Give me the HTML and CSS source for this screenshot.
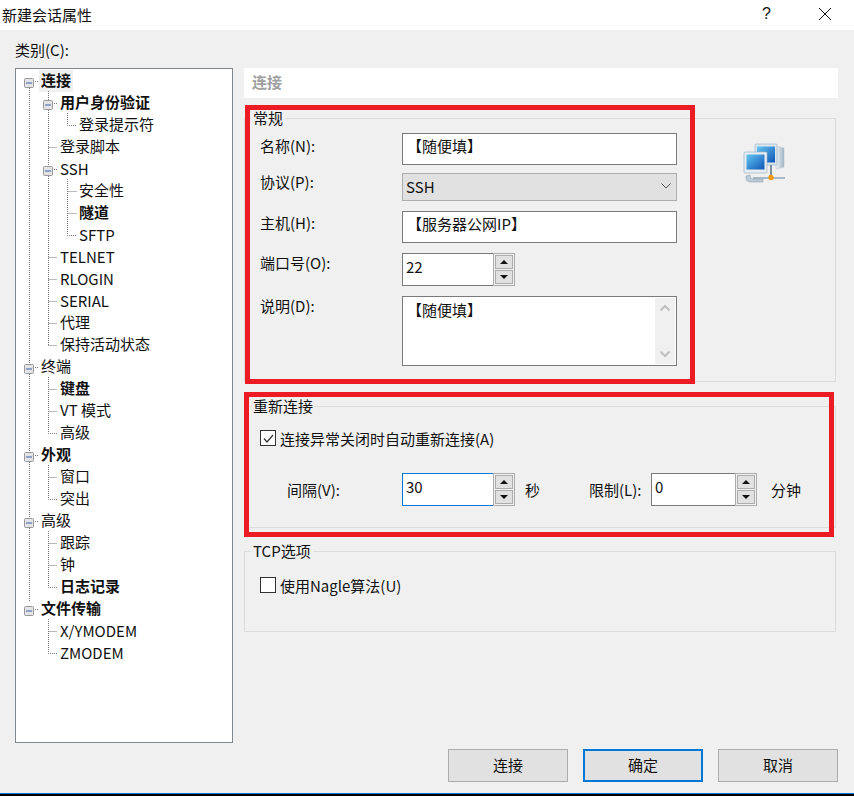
FILE: index.html
```html
<!DOCTYPE html>
<html lang="zh-CN">
<head>
  <meta charset="utf-8">
  <title>新建会话属性</title>
  <link rel="stylesheet" href="styles.css">
</head>
<body>
  <div class="titlebar">
    <span class="title">新建会话属性</span>
    <span class="help">?</span>
    <svg class="close" width="14" height="14" viewBox="0 0 14 14"><path d="M1 1 L13 13 M13 1 L1 13" stroke="#111" stroke-width="1" fill="none"/></svg>
  </div>

  <div class="dialog">
    <div class="category-label">类别(C):</div>
    <div class="columns">
      <!-- category tree, connector lines are drawn over it -->
      <div class="tree">
        <svg class="tree-lines" width="216" height="673" viewBox="0 0 216 673">
          <g stroke="#777" stroke-width="1" stroke-dasharray="1 1" fill="none">
            <path d="M13.5 19 V533"/>
            <path d="M32.5 22 V31 M32.5 41 V97 M32.5 107 V276"/>
            <path d="M51.5 44 V56.5 H61"/>
            <path d="M32.5 78.5 H41"/>
            <path d="M51.5 110 V166.5 H61 M51.5 122.5 H61 M51.5 144.5 H61"/>
            <path d="M32.5 188.5 H41 M32.5 210.5 H41 M32.5 232.5 H41 M32.5 254.5 H41 M32.5 276.5 H41"/>
            <path d="M32.5 308 V364.5 H41 M32.5 320.5 H41 M32.5 342.5 H41"/>
            <path d="M32.5 396 V430.5 H41 M32.5 408.5 H41"/>
            <path d="M32.5 462 V518.5 H41 M32.5 474.5 H41 M32.5 496.5 H41"/>
            <path d="M32.5 550 V584.5 H41 M32.5 562.5 H41"/>
            <path d="M19 12.5 H23 M19 298.5 H23 M19 386.5 H23 M19 452.5 H23 M19 540.5 H23 M38 34.5 H42 M38 100.5 H42"/>
          </g>
          <g class="toggles">
            <rect x="8.5" y="9.5" width="9" height="9" rx="1"/><path d="M10 14 H16"/>
            <rect x="27.5" y="31.5" width="9" height="9" rx="1"/><path d="M29 36 H35"/>
            <rect x="27.5" y="97.5" width="9" height="9" rx="1"/><path d="M29 102 H35"/>
            <rect x="8.5" y="295.5" width="9" height="9" rx="1"/><path d="M10 300 H16"/>
            <rect x="8.5" y="383.5" width="9" height="9" rx="1"/><path d="M10 388 H16"/>
            <rect x="8.5" y="449.5" width="9" height="9" rx="1"/><path d="M10 454 H16"/>
            <rect x="8.5" y="537.5" width="9" height="9" rx="1"/><path d="M10 542 H16"/>
          </g>
        </svg>
        <div class="row lv0 bold"><span class="selected">连接</span></div>
        <div class="row lv1 bold">用户身份验证</div>
        <div class="row lv2">登录提示符</div>
        <div class="row lv1">登录脚本</div>
        <div class="row lv1 en">SSH</div>
        <div class="row lv2">安全性</div>
        <div class="row lv2 bold">隧道</div>
        <div class="row lv2 en">SFTP</div>
        <div class="row lv1 en">TELNET</div>
        <div class="row lv1 en">RLOGIN</div>
        <div class="row lv1 en">SERIAL</div>
        <div class="row lv1">代理</div>
        <div class="row lv1">保持活动状态</div>
        <div class="row lv0">终端</div>
        <div class="row lv1 bold">键盘</div>
        <div class="row lv1">VT 模式</div>
        <div class="row lv1">高级</div>
        <div class="row lv0 bold">外观</div>
        <div class="row lv1">窗口</div>
        <div class="row lv1">突出</div>
        <div class="row lv0">高级</div>
        <div class="row lv1">跟踪</div>
        <div class="row lv1">钟</div>
        <div class="row lv1 bold">日志记录</div>
        <div class="row lv0 bold">文件传输</div>
        <div class="row lv1 en">X/YMODEM</div>
        <div class="row lv1 en">ZMODEM</div>
      </div>

      <div class="panel">
        <div class="panel-head">连接</div>

        <fieldset class="group group-general">
          <legend>常规</legend>
          <div class="form">
            <div class="fields">
              <label class="lbl lbl-name">名称(N):</label>
              <div class="input h-name">【随便填】</div>
              <label class="lbl lbl-proto">协议(P):</label>
              <div class="select">SSH
                <svg width="10" height="6" viewBox="0 0 10 6"><path d="M0.5 0.5 L5 5 L9.5 0.5" stroke="#555" fill="none"/></svg>
              </div>
              <label class="lbl lbl-host">主机(H):</label>
              <div class="input h-name">【服务器公网IP】</div>
              <label class="lbl">端口号(O):</label>
              <div class="spin">
                <div class="spin-input">22</div>
                <div class="spin-btns"><span class="up"></span><span class="down"></span></div>
              </div>
              <label class="lbl">说明(D):</label>
              <div class="input textarea">【随便填】
                <div class="scrollbar">
                  <svg width="10" height="8" viewBox="0 0 10 8"><path d="M0.5 6.5 L5 2 L9.5 6.5" stroke="#c0c0c0" stroke-width="2" fill="none"/></svg>
                  <svg width="10" height="8" viewBox="0 0 10 8"><path d="M0.5 1.5 L5 6 L9.5 1.5" stroke="#c0c0c0" stroke-width="2" fill="none"/></svg>
                </div>
              </div>
            </div>
            <svg class="net-icon" width="44" height="42" viewBox="0 0 44 42">
              <defs>
                <linearGradient id="scr" x1="0" y1="0" x2="1" y2="1"><stop offset="0" stop-color="#63c6f0"/><stop offset="1" stop-color="#0f55b8"/></linearGradient>
                <linearGradient id="case" x1="0" y1="0" x2="1" y2="0"><stop offset="0" stop-color="#eef3f7"/><stop offset="1" stop-color="#9fb3c4"/></linearGradient>
              </defs>
              <path d="M33 3 L41 5 V24 L33 26Z" fill="url(#case)" stroke="#b4c3cf" stroke-width="0.5"/>
              <rect x="12" y="1" width="22" height="21" rx="1" fill="#dbe6ee" stroke="#a0b3c2" stroke-width="0.7"/>
              <rect x="14" y="3.5" width="18" height="16" fill="url(#scr)"/>
              <path d="M10 35 H42" stroke="#a8bac8" stroke-width="2"/>
              <path d="M28 22 V35" stroke="#7f919f" stroke-width="2"/>
              <path d="M3 33 Q2 39 8 39 H20 V36 H10 Q7 36 7 32 Z" fill="#b9c9d5" stroke="#93a6b5" stroke-width="0.6"/>
              <rect x="1" y="9" width="23" height="21" rx="1" fill="#e6eef4" stroke="#a0b3c2" stroke-width="0.7"/>
              <rect x="3.5" y="11.5" width="18" height="15" fill="url(#scr)"/>
              <circle cx="28" cy="34.5" r="2.7" fill="#f09a12"/>
            </svg>
          </div>
        </fieldset>

        <fieldset class="group group-reconnect">
          <legend>重新连接</legend>
          <div class="check-row">
            <span class="check"><svg width="13" height="13" viewBox="0 0 13 13"><path d="M2 6.5 L5 10 L11 3" stroke="#333" stroke-width="1.2" fill="none"/></svg></span>
            连接异常关闭时自动重新连接(A)
          </div>
          <div class="interval-row">
            <label class="interval-lbl">间隔(V):</label>
            <div class="spin">
              <div class="spin-input focus">30</div>
              <div class="spin-btns"><span class="up"></span><span class="down"></span></div>
            </div>
            <span class="unit-sec">秒</span>
            <label class="limit-lbl">限制(L):</label>
            <div class="spin">
              <div class="spin-input limit-input">0</div>
              <div class="spin-btns"><span class="up"></span><span class="down"></span></div>
            </div>
            <span class="unit-min">分钟</span>
          </div>
        </fieldset>

        <fieldset class="group group-tcp">
          <legend>TCP选项</legend>
          <div class="check-row">
            <span class="check"></span>
            使用Nagle算法(U)
          </div>
        </fieldset>

        <div class="red-box red-general"></div>
        <div class="red-box red-reconnect"></div>
      </div>
    </div>

    <div class="buttons">
      <button class="btn">连接</button>
      <button class="btn btn-default">确定</button>
      <button class="btn">取消</button>
    </div>
  </div>
  <div class="bottom-edge"></div>
</body>
</html>
```

FILE: styles.css
```css
html, body {
  margin: 0;
  padding: 0;
}

body {
  width: 854px;
  height: 796px;
  overflow: hidden;
  background: #f0f0f0;
  color: #111;
  font-family: "Noto Sans CJK SC", "Noto Sans", sans-serif;
  font-size: 15px;
}

.titlebar {
  display: flex;
  align-items: center;
  height: 30px;
  box-sizing: border-box;
  background: #fff;
  padding: 0 0 2px 2px;
}

.title {
  flex: 1;
}

.help {
  width: 12px;
  margin-right: 44px;
  font-family: "Liberation Sans", sans-serif;
  font-size: 16px;
}

.close {
  margin-right: 22px;
}

.dialog {
  height: 763px;
  padding-left: 15px;
  box-sizing: border-box;
}

.category-label {
  height: 38px;
  line-height: 40px;
}

.columns {
  display: flex;
  gap: 11px;
}

/* tree */
.tree {
  position: relative;
  width: 218px;
  height: 675px;
  box-sizing: border-box;
  padding-top: 1px;
  background: #fff;
  border: 1px solid #82878c;
}

.tree-lines {
  position: absolute;
  left: 0;
  top: 0;
}

.toggles rect {
  fill: #e4e4e4;
  stroke: #999;
}

.toggles path {
  stroke: #3a5fa8;
  stroke-width: 1;
}

.row {
  height: 22px;
  line-height: 20px;
  white-space: nowrap;
}

.row.en {
  line-height: 22px;
}

.lv0 {
  padding-left: 25px;
}

.lv1 {
  padding-left: 44px;
}

.lv2 {
  padding-left: 63px;
}

.bold {
  font-weight: 700;
}

.selected {
  display: inline-block;
  height: 22px;
  margin: -1px 0 0 -2px;
  padding: 0 2px;
  background: #f0f0f0;
}

/* right side */
.panel {
  position: relative;
  width: 594px;
}

.panel-head {
  height: 30px;
  line-height: 28px;
  padding-left: 8px;
  margin-bottom: 10px;
  background: #fff;
  color: #a0a0a0;
  font-weight: 700;
}

.group {
  width: 592px;
  box-sizing: border-box;
  margin: 0;
  padding: 0 0 0 15px;
  border: 1px solid #dcdcdc;
}

.group legend {
  margin-left: -9px;
  padding: 0 2px;
  height: 20px;
  line-height: 20px;
}

.group-general {
  height: 274px;
  margin-bottom: 14px;
}

.group-reconnect {
  height: 132px;
  margin-bottom: 13px;
}

.group-tcp {
  height: 91px;
}

.form {
  display: flex;
  padding-top: 5px;
}

.fields {
  display: grid;
  grid-template-columns: 142px 275px;
  grid-template-rows: 40px 38px 42px 43px 70px;
}

.net-icon {
  margin: 10px 0 0 66px;
}

.lbl {
  line-height: 20px;
}

.lbl-name {
  margin-top: 3px;
}

.lbl-proto {
  margin-top: -1px;
}

.lbl-host {
  margin-top: 2px;
}

.input {
  position: relative;
  box-sizing: border-box;
  padding-left: 4px;
  line-height: 23px;
  background: #fff;
  border: 1px solid #7a7a7a;
}

.h-name {
  height: 32px;
}

.textarea {
  height: 70px;
  line-height: 25px;
}

.scrollbar {
  position: absolute;
  right: 1px;
  top: 1px;
  bottom: 1px;
  width: 20px;
  display: flex;
  flex-direction: column;
  justify-content: space-between;
  align-items: center;
  padding: 6px 0;
  box-sizing: border-box;
  background: #f0f0f0;
}

.select {
  display: flex;
  align-items: center;
  justify-content: space-between;
  box-sizing: border-box;
  height: 28px;
  padding: 0 5px 2px 3px;
  background: #e1e1e1;
  border: 1px solid #adadad;
}

.spin {
  display: flex;
  height: 33px;
}

.spin-input {
  box-sizing: border-box;
  width: 91px;
  padding-left: 3px;
  line-height: 26px;
  background: #fff;
  border: 1px solid #7a7a7a;
  border-right: none;
}

.spin-input.focus {
  border-color: #0078d7;
}

.limit-input {
  width: 84px;
}

.spin-btns {
  display: flex;
  flex-direction: column;
  justify-content: center;
  gap: 1px;
  box-sizing: border-box;
  width: 22px;
  padding: 0 1px;
  border: 1px solid #adadad;
}

.spin-btns span {
  position: relative;
  height: 14px;
  box-sizing: border-box;
  background: #e1e1e1;
  border: 1px solid #adadad;
}

.spin-btns span::after {
  content: "";
  position: absolute;
  left: 4px;
  top: 4px;
  border-left: 4px solid transparent;
  border-right: 4px solid transparent;
}

.spin-btns .up::after {
  border-bottom: 4px solid #111;
}

.spin-btns .down::after {
  border-top: 4px solid #111;
}

.check-row {
  display: flex;
  align-items: center;
  gap: 4px;
  height: 20px;
}

.group-reconnect .check-row {
  margin-top: 12px;
}

.group-tcp .check-row {
  margin-top: 14px;
}

.check {
  display: flex;
  align-items: center;
  justify-content: center;
  width: 16px;
  height: 16px;
  box-sizing: border-box;
  background: #fff;
  border: 1px solid #333;
}

.interval-row {
  display: flex;
  align-items: center;
  margin-top: 25px;
  padding-left: 27px;
}

.interval-lbl {
  width: 115px;
}

.unit-sec {
  width: 54px;
  margin-left: 10px;
  flex: 0 0 54px;
  margin-right: 10px;
}

.limit-lbl {
  width: 62px;
}

.unit-min {
  margin-left: 14px;
}

/* annotation frames drawn over the dialog */
.red-box {
  position: absolute;
  box-sizing: border-box;
  border: 5px solid #ed1c24;
}

.red-general {
  left: 1px;
  top: 37px;
  width: 450px;
  height: 279px;
}

.red-reconnect {
  left: 0;
  top: 324px;
  width: 590px;
  height: 145px;
}

.buttons {
  display: flex;
  justify-content: flex-end;
  gap: 15px;
  margin-top: 6px;
  padding-right: 16px;
}

.btn {
  width: 120px;
  height: 33px;
  padding: 0 0 3px;
  background: #e1e1e1;
  border: 1px solid #adadad;
  color: #111;
  font: inherit;
}

.btn-default {
  border: 2px solid #0078d7;
}

.bottom-edge {
  height: 3px;
  box-sizing: border-box;
  background: #000;
  border-top: 1px solid #0078d7;
}
```
